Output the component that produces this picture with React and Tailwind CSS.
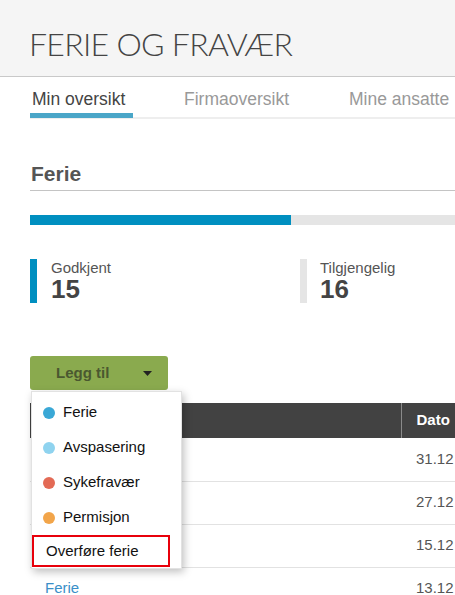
import React from 'react';

const items = [
  { label: 'Ferie', color: 'bg-[#3aa8d6]' },
  { label: 'Avspasering', color: 'bg-[#8fd3ef]' },
  { label: 'Sykefravær', color: 'bg-[#e36a55]' },
  { label: 'Permisjon', color: 'bg-[#f2a54a]' },
];

const rows = [
  { type: '', dato: '31.12' },
  { type: '', dato: '27.12' },
  { type: '', dato: '15.12' },
  { type: 'Ferie', dato: '13.12' },
];

export default function App() {
  return (
    <div className="w-[455px] h-[595px] overflow-hidden bg-white font-['Liberation_Sans',Arial,sans-serif]">
      {/* Topptekst */}
      <div className="h-[77px] bg-[#f5f5f5] border-b border-[#c9c9c9] pl-[29px] pt-[28px]">
        <h1 className="font-['Lato',sans-serif] font-light text-[32px] leading-none text-[#444] tracking-[-0.7px] whitespace-nowrap">
          FERIE OG FRAVÆR
        </h1>
      </div>

      {/* Faner */}
      <div className="ml-[30px] w-[600px] border-b-2 border-[#eeeeee] flex h-[42px]">
        <div className="w-[103px] h-[41px] border-b-[5px] border-[#4aa6c8] pt-[9px] pl-[2px] text-[17.5px] text-[#444] whitespace-nowrap">
          Min oversikt
        </div>
        <div className="pl-[51px] pt-[9px] text-[17.5px] text-[#999] whitespace-nowrap">Firmaoversikt</div>
        <div className="pl-[60px] pt-[9px] text-[17.5px] text-[#999] whitespace-nowrap">Mine ansatte</div>
      </div>

      <div className="pl-[30px] w-[600px]">
        {/* Ferie */}
        <h2 className="mt-[42px] pl-[1px] text-[21px] leading-[26px] font-bold text-[#555] pb-[3px] border-b border-[#c4c4c4]">
          Ferie
        </h2>

        <div className="mt-[24px] h-[10px] flex bg-[#e5e5e5]">
          <div className="w-[261px] bg-[#008fc0]" />
        </div>

        {/* Tall */}
        <div className="mt-[34px] flex">
          <div className="w-[270px] flex h-[44px]">
            <div className="w-[7px] bg-[#008fc0]" />
            <div className="pl-[14px]">
              <div className="text-[15px] leading-[17px] text-[#555]">Godkjent</div>
              <div className="text-[26px] leading-[26px] font-bold text-[#444]">15</div>
            </div>
          </div>
          <div className="flex h-[44px]">
            <div className="w-[7px] bg-[#e5e5e5]" />
            <div className="pl-[13px]">
              <div className="text-[15px] leading-[17px] text-[#555]">Tilgjengelig</div>
              <div className="text-[26px] leading-[26px] font-bold text-[#444]">16</div>
            </div>
          </div>
        </div>

        {/* Knapp og tabell */}
        <div className="relative mt-[53px]">
          <button className="w-[138px] h-[34px] rounded-[3px] bg-[#8aaa4e] flex items-center text-[#4a5830] font-bold text-[15px]">
            <span className="pl-[26px]">Legg til</span>
            <svg width="9" height="5" viewBox="0 0 9 5" className="ml-[34px]">
              <path d="M0 0h9L4.5 5z" fill="#222" />
            </svg>
          </button>

          <table className="mt-[13px] w-[480px] border-collapse text-[15px]">
            <thead>
              <tr className="bg-[#424242] h-[35px]">
                <th className="w-[371px]" />
                <th className="border-l border-[#8a8a8a] text-left pl-[15px] text-white font-bold">Dato</th>
              </tr>
            </thead>
            <tbody>
              {rows.map((r, i) => (
                <tr key={i} className="h-[43px] border-b border-[#e2e2e2]">
                  <td className="pl-[15px] text-[#3a8fc8]">{r.type}</td>
                  <td className="pl-[15px] text-[#555]">{r.dato}</td>
                </tr>
              ))}
            </tbody>
          </table>

          {/* Nedtrekksmeny */}
          <div className="absolute left-[1px] top-[35px] w-[151px] bg-white border border-[#e2e2e2] shadow-[2px_3px_8px_rgba(0,0,0,0.25)] pt-[3px] pb-[1px]">
            {items.map((it) => (
              <div key={it.label} className="h-[35px] flex items-center pl-[11px] text-[15px] text-[#111]">
                <span className={`w-[12px] h-[12px] rounded-full ${it.color}`} />
                <span className="pl-[8px]">{it.label}</span>
              </div>
            ))}
            <div className="h-[32px] w-[138px] border-2 border-[#e8000b] flex items-center pl-[12px] text-[15px] text-[#111]">
              Overføre ferie
            </div>
          </div>
        </div>
      </div>
    </div>
  );
}
